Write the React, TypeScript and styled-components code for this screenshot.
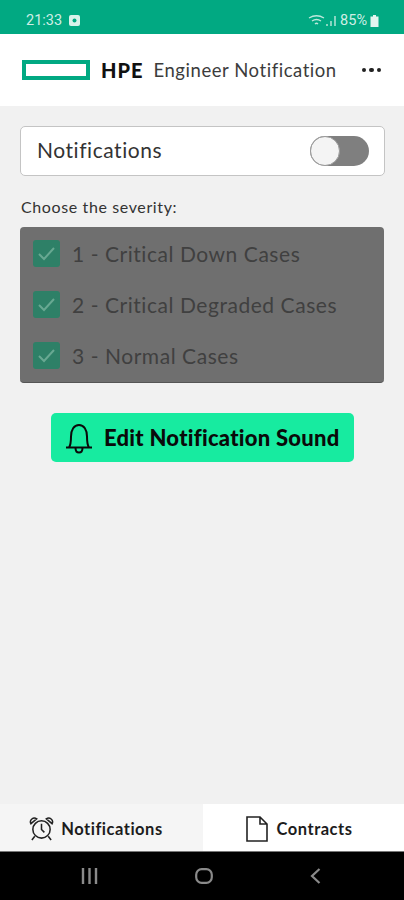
import React from "react";
import styled, { createGlobalStyle } from "styled-components";

const Global = createGlobalStyle`
  html, body { margin: 0; padding: 0; background: #f1f1f1; }
  * { box-sizing: border-box; }
  body { font-family: "Lato", "Noto Sans", sans-serif; }
`;

const Screen = styled.div`
  width: 404px;
  height: 900px;
  display: flex;
  flex-direction: column;
  background: #f1f1f1;
  overflow: hidden;
`;

const StatusBar = styled.div`
  height: 34px;
  background: #01a982;
  color: #cfeee5;
  display: flex;
  align-items: center;
  justify-content: space-between;
  padding: 7px 25px 0 26px;
  font-size: 14.5px;
  font-family: "Roboto", sans-serif;
`;

const StatusGroup = styled.div<{ $tight?: boolean }>`
  display: flex;
  align-items: center;
  gap: ${(p) => (p.$tight ? "3px" : "7px")};
`;

const Header = styled.header`
  height: 72px;
  background: #fff;
  display: flex;
  align-items: center;
  padding: 0 23px 0 22px;
`;

const Logo = styled.div`
  width: 68px;
  height: 20px;
  border: 4px solid #01a982;
  margin-right: 11px;
`;

const Brand = styled.span`
  font-weight: 900;
  font-size: 20px;
  letter-spacing: 1px;
  color: #111;
  margin-right: 10px;
`;

const Title = styled.span`
  font-size: 18.5px;
  color: #3c3c3c;
  letter-spacing: 0.55px;
  flex: 1;
  white-space: nowrap;
`;

const Dots = styled.div`
  display: flex;
  gap: 3px;
`;

const Dot = styled.i`
  width: 4.5px;
  height: 4.5px;
  border-radius: 50%;
  background: #222;
`;

const Main = styled.main`
  flex: 1;
  padding: 20px 20px 0;
  display: flex;
  flex-direction: column;
`;

const ToggleCard = styled.div`
  height: 50px;
  background: #fff;
  border: 1px solid #c4c4c4;
  border-radius: 5px;
  display: flex;
  align-items: center;
  justify-content: space-between;
  padding: 0 15px 0 16px;
  margin-right: -1px;
`;

const ToggleLabel = styled.span`
  font-size: 21px;
  color: #333;
  letter-spacing: 0.55px;
  padding-bottom: 3px;
`;

const Track = styled.div`
  width: 59px;
  height: 30px;
  border-radius: 15px;
  background: #7f7f7f;
  position: relative;
`;

const Knob = styled.div`
  position: absolute;
  left: 0;
  top: 0;
  width: 30px;
  height: 30px;
  border-radius: 50%;
  background: #f4f4f4;
  border: 1px solid #9a9a9a;
`;

const SectionLabel = styled.div`
  margin-top: 21px;
  padding-left: 1px;
  height: 20px;
  line-height: 20px;
  font-size: 16px;
  color: #333;
  letter-spacing: 0.62px;
  white-space: nowrap;
`;

const SeverityPanel = styled.div`
  margin-top: 10px;
  height: 156px;
  background: #6f6f6f;
  border-radius: 4px;
  border-bottom: 1px solid #555;
  display: flex;
  flex-direction: column;
  padding: 1px 14px 0 13px;
`;

const SeverityRow = styled.div`
  height: 51px;
  display: flex;
  align-items: center;
  gap: 12px;
`;

const Check = styled.div`
  width: 27px;
  height: 27px;
  border-radius: 3px;
  background: #2e8067;
  display: flex;
  align-items: center;
  justify-content: center;
`;

const SeverityText = styled.span`
  font-size: 21px;
  color: #404040;
  letter-spacing: 0.55px;
  white-space: nowrap;
`;

const EditButton = styled.button`
  align-self: center;
  margin-top: 30px;
  margin-left: 1px;
  width: 303px;
  height: 49px;
  border: 0;
  border-radius: 5px;
  background: #17eba0;
  display: flex;
  align-items: center;
  gap: 11px;
  padding: 0 0 0 14px;
  font-family: inherit;
  font-weight: 900;
  font-size: 22px;
  letter-spacing: 0.27px;
  color: #0a0a0a;
  white-space: nowrap;
`;

const TabBar = styled.nav`
  height: 48px;
  display: flex;
  border-bottom: 1px solid #777;
`;

const Tab = styled.div<{ $active?: boolean }>`
  flex: 1;
  display: flex;
  align-items: center;
  justify-content: center;
  gap: ${(p) => (p.$active ? "7px" : "9px")};
  padding: 2px ${(p) => (p.$active ? "11px" : "9px")} 0 0;
  background: ${(p) => (p.$active ? "#f5f5f5" : "#fff")};
  font-weight: 700;
  font-size: 16.5px;
  letter-spacing: 0.5px;
  color: #1c1c1c;
`;

const SystemNav = styled.div`
  height: 48px;
  background: #000;
  display: flex;
  align-items: center;
  justify-content: space-between;
  padding: 0 83px 0 81px;
`;

const CheckMark = () => (
  <svg width="19" height="15" viewBox="0 0 19 15" fill="none">
    <path d="M2 8l5 5L17 2" stroke="#68a892" strokeWidth="2" />
  </svg>
);

const severities = ["1 - Critical Down Cases", "2 - Critical Degraded Cases", "3 - Normal Cases"];

export default function App() {
  return (
    <Screen>
      <Global />
      <StatusBar>
        <StatusGroup>
          <span>21:33</span>
          <svg width="11" height="11" viewBox="0 0 11 11">
            <rect width="11" height="11" rx="2" fill="#d8f2ea" />
            <circle cx="5.5" cy="5.5" r="2" fill="#01a982" />
          </svg>
        </StatusGroup>
        <StatusGroup $tight>
          <svg width="29" height="12" viewBox="0 0 29 12" fill="none" stroke="#bfe8dc">
            <path d="M1 3c5-3 10-3 15 0M4 6c3-2 6-2 9 0M7 9c1-1 2-1 3 0" strokeWidth="1.3" />
            <path d="M19 11V9M23 11V6M27 11V1" strokeWidth="1.4" />
          </svg>
          <span>85%</span>
          <svg width="9" height="12" viewBox="0 0 9 12">
            <path d="M3 0h3v1.5h2.500V12H.5V1.500H3z" fill="#e2f5ef" />
          </svg>
        </StatusGroup>
      </StatusBar>
      <Header>
        <Logo />
        <Brand>HPE</Brand>
        <Title>Engineer Notification</Title>
        <Dots>
          <Dot />
          <Dot />
          <Dot />
        </Dots>
      </Header>
      <Main>
        <ToggleCard>
          <ToggleLabel>Notifications</ToggleLabel>
          <Track>
            <Knob />
          </Track>
        </ToggleCard>
        <SectionLabel>Choose the severity:</SectionLabel>
        <SeverityPanel>
          {severities.map((s) => (
            <SeverityRow key={s}>
              <Check>
                <CheckMark />
              </Check>
              <SeverityText>{s}</SeverityText>
            </SeverityRow>
          ))}
        </SeverityPanel>
        <EditButton>
          <svg width="28" height="32" viewBox="0 0 28 32" fill="none" stroke="#0a0a0a" strokeWidth="2">
            <path d="M1 25.500h26M4 25.500c2-3 2-6 2-11C6 8 9 3 14 3s8 5 8 11.500c0 5 0 8 2 11M10.500 26c0 6 7 6 7 0" />
          </svg>
          Edit Notification Sound
        </EditButton>
      </Main>
      <TabBar>
        <Tab $active>
          <svg width="25" height="25" viewBox="0 0 26 26" fill="none" stroke="#222" strokeWidth="1.6">
            <circle cx="13" cy="14" r="9" />
            <path d="M13 8v6l3 3M2 8a4 4 0 0 1 6-5zM24 8a4 4 0 0 0-6-5zM6 21l-3 4M20 21l3 4" />
          </svg>
          Notifications
        </Tab>
        <Tab>
          <svg width="22" height="26" viewBox="0 0 22 26" fill="none" stroke="#222" strokeWidth="1.6">
            <path d="M1 1h13l7 7v17H1zM14 1v7h7" />
          </svg>
          Contracts
        </Tab>
      </TabBar>
      <SystemNav>
        <svg width="17" height="16" viewBox="0 0 17 16" fill="none" stroke="#8a8a8a" strokeWidth="2.4">
          <path d="M2 0v16M8.500 0v16M15 0v16" />
        </svg>
        <svg width="18" height="16" viewBox="0 0 18 16" fill="none" stroke="#8a8a8a" strokeWidth="2.200">
          <rect x="1.200" y="1.200" width="15.600" height="13.600" rx="5.500" />
        </svg>
        <svg width="11" height="16" viewBox="0 0 11 16" fill="none" stroke="#8a8a8a" strokeWidth="2.200">
          <path d="M9.500 1L2 8l7.500 7" />
        </svg>
      </SystemNav>
    </Screen>
  );
}
